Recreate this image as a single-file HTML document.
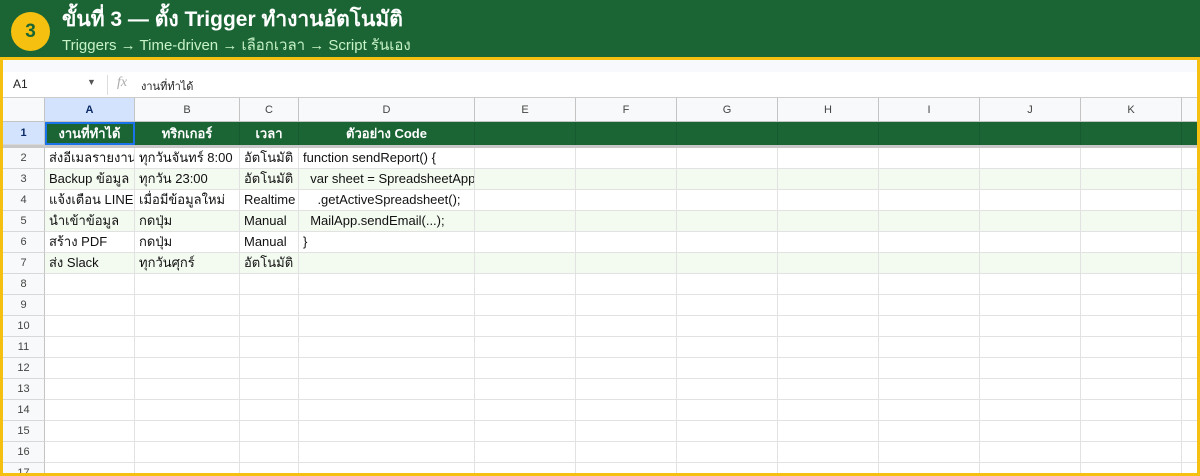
<!DOCTYPE html>
<html><head><meta charset="utf-8"><style>
*{margin:0;padding:0;box-sizing:border-box}
body{width:1200px;height:476px;overflow:hidden;background:#fff;font-family:"Liberation Sans","Noto Sans CJK SC",sans-serif;position:relative}
.hdr{position:absolute;left:0;top:0;width:1200px;height:58px;background:#1b6535}
.circ{position:absolute;left:11px;top:12px;width:39px;height:39px;border-radius:50%;background:#f5c010;color:#1b6535;font-size:19px;font-weight:bold;text-align:center;line-height:39px}
.t1{position:absolute;left:62px;top:3px;color:#fff;font-size:21px;font-weight:bold;white-space:nowrap}
.t2{position:absolute;left:62px;top:33px;color:#c6f2c6;font-size:15px;white-space:nowrap}
.frame{position:absolute;left:0;top:57px;width:1200px;height:419px;border:3px solid #f5c010;overflow:hidden}
.strip{position:absolute;left:0;top:0;width:1194px;height:12px;background:#f8f9fc}
.fb{position:absolute;left:0;top:12px;width:1194px;height:26px;background:#fff;border-bottom:1px solid #ccc;font-size:12px;color:#222}
.a{position:absolute}
.c{position:absolute;font-size:13px;color:#111;white-space:nowrap;overflow:hidden;border-right:1px solid #e2e2e2;border-bottom:1px solid #e2e2e2;line-height:20px;padding-left:4px}
.rh{position:absolute;left:0;width:42px;font-size:11px;color:#444;text-align:center;background:#f8f9fa;border-right:1px solid #c4c4c4;border-bottom:1px solid #d8d8d8;line-height:20px}
.ch{position:absolute;top:38px;height:24px;font-size:11px;color:#444;text-align:center;line-height:24px;background:#f8f9fa;border-right:1px solid #c4c4c4;border-bottom:1px solid #c4c4c4}
</style></head><body>
<div class="hdr">
<div class="circ">3</div>
<div class="t1">ขั้นที่ 3 — ตั้ง Trigger ทำงานอัตโนมัติ</div>
<div class="t2">Triggers → Time-driven → เลือกเวลา → Script รันเอง</div>
</div>
<div class="frame">
<div class="strip"></div>
<div class="fb">
<span class="a" style="left:10px;top:5px">A1</span>
<span class="a" style="left:84px;top:5px;font-size:9px;color:#555">▼</span>
<span class="a" style="left:104px;top:3px;width:1px;height:20px;background:#ddd"></span>
<span class="a" style="left:114px;top:3px;font-style:italic;color:#aaa;font-family:'Liberation Serif',serif;font-size:14px">fx</span>
<span class="a" style="left:138px;top:5px;font-size:11px">งานที่ทำได้</span>
</div>
<div id="g"></div>
</div>
<script>
var cols=[[42,132,'A'],[132,237,'B'],[237,296,'C'],[296,472,'D'],[472,573,'E'],[573,674,'F'],[674,775,'G'],[775,876,'H'],[876,977,'I'],[977,1078,'J'],[1078,1179,'K'],[1179,1300,'']];
var h='';
h+='<div class="ch" style="left:0;width:42px"></div>';
cols.forEach(function(c,i){h+='<div class="ch" style="left:'+c[0]+'px;width:'+(c[1]-c[0])+'px;'+(i==0?'background:#d3e3fd;color:#0b2a66;font-weight:bold':'')+'">'+c[2]+'</div>';});
h+='<div class="rh" style="top:62px;height:23px;line-height:23px;background:#d3e3fd;color:#0b2a66;font-weight:bold">1</div>';
h+='<div class="a" style="left:42px;top:62px;width:1160px;height:23px;background:#1b6535"></div>';
var r1=['งานที่ทำได้','ทริกเกอร์','เวลา','ตัวอย่าง Code'];
cols.forEach(function(c,i){h+='<div class="a" style="left:'+c[0]+'px;top:62px;width:'+(c[1]-c[0])+'px;height:23px;border-right:1px solid #175a2f;color:#fff;font-weight:bold;font-size:13px;text-align:center;line-height:23px">'+(r1[i]||'')+'</div>';});
h+='<div class="a" style="left:42px;top:62px;width:90px;height:23px;border:2px solid #1a73e8"></div>';
h+='<div class="a" style="left:0;top:85px;width:1200px;height:3px;background:#c8c8c8"></div>';
var data=[['ส่งอีเมลรายงาน','ทุกวันจันทร์ 8:00','อัตโนมัติ','function sendReport() {'],
['Backup ข้อมูล','ทุกวัน 23:00','อัตโนมัติ','&nbsp;&nbsp;var sheet = SpreadsheetApp'],
['แจ้งเตือน LINE','เมื่อมีข้อมูลใหม่','Realtime','&nbsp;&nbsp;&nbsp;&nbsp;.getActiveSpreadsheet();'],
['นำเข้าข้อมูล','กดปุ่ม','Manual','&nbsp;&nbsp;MailApp.sendEmail(...);'],
['สร้าง PDF','กดปุ่ม','Manual','}'],
['ส่ง Slack','ทุกวันศุกร์','อัตโนมัติ','']];
for(var r=2;r<=17;r++){
 var yy=88+(r-2)*21;
 var bg=(r==3||r==5||r==7)?'#f3faf0':'#fff';
 h+='<div class="rh" style="top:'+yy+'px;height:21px">'+r+'</div>';
 var d=data[r-2]||[];
 for(var i=0;i<cols.length;i++){var c=cols[i];h+='<div class="c" style="left:'+c[0]+'px;top:'+yy+'px;width:'+(c[1]-c[0])+'px;height:21px;background:'+bg+'">'+(d[i]||'')+'</div>';}
}
document.getElementById('g').innerHTML=h;
</script>
</body></html>
